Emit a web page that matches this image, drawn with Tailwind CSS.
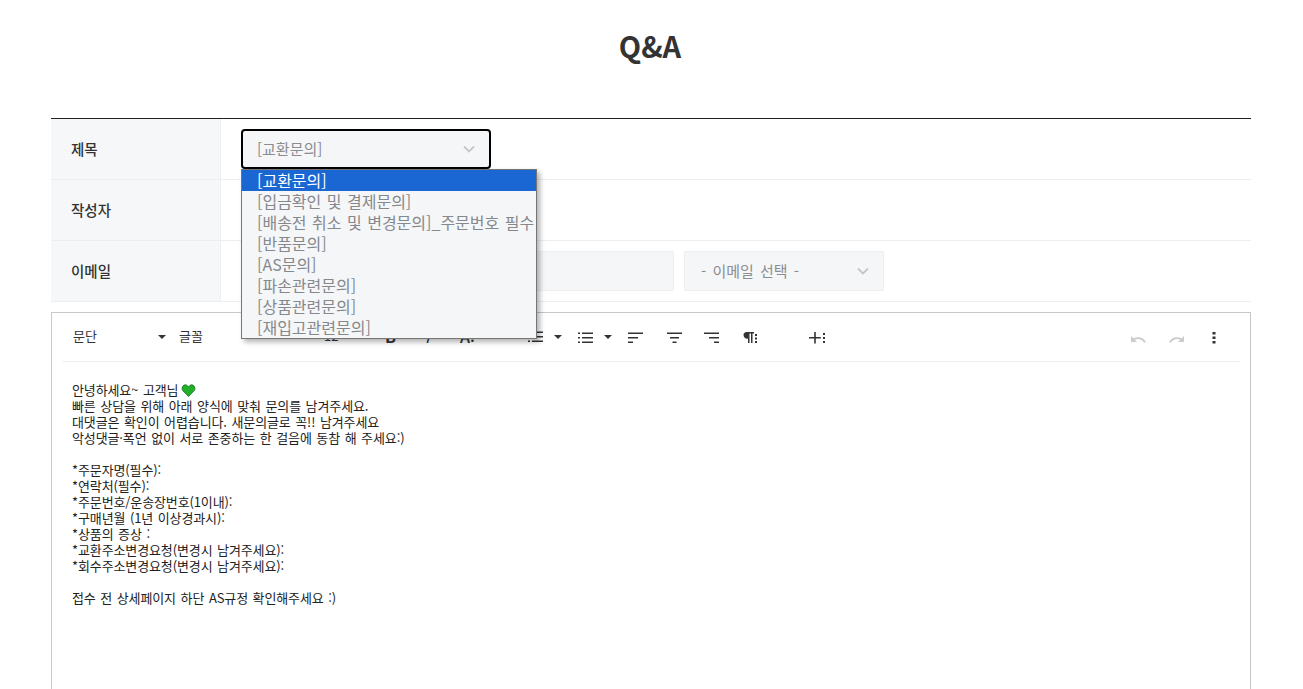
<!DOCTYPE html>
<html lang="ko">
<head>
<meta charset="utf-8">
<script src="https://cdn.jsdelivr.net/npm/@tailwindcss/browser@4"></script>
<title>Q&amp;A</title>
</head>
<body class="bg-white font-['Noto_Sans_CJK_KR','Noto_Sans',sans-serif] text-[#333]">
<div class="h-[689px] overflow-hidden">
  <div class="w-[1200px] ml-[51px]">
    <h1 class="h-[118px] pt-[24px] pr-[2px] text-center text-[29px] leading-[42px] font-bold text-[#333]">Q&amp;A</h1>

    <div class="relative border-t border-[#222]">
      <div class="flex h-[61px] border-b border-[#eceef0]">
        <div class="w-[170px] shrink-0 bg-[#f6f7f8] border-r border-[#eceef0] pl-5 flex items-center text-[14.5px] font-medium text-[#333]"><span class="-mt-px">제목</span></div>
        <div class="pl-5 flex items-center">
          <div class="w-[250px] h-[40px] bg-[#f5f6f8] border-2 border-black rounded-[4px] pl-[14px] pr-[14px] flex items-center justify-between text-[15px] text-[#8a8d91]">
            <span class="pt-px">[교환문의]</span>
            <svg class="w-3 h-2" viewBox="0 0 12 8" fill="none" stroke="#c4c7ca" stroke-width="1.8"><path d="M1 1.500l5 5 5-5"/></svg>
          </div>
        </div>
      </div>
      <div class="flex h-[61px] border-b border-[#eceef0]">
        <div class="w-[170px] shrink-0 bg-[#f6f7f8] border-r border-[#eceef0] pl-5 flex items-center text-[14.5px] font-medium text-[#333]"><span class="-mt-px">작성자</span></div>
      </div>
      <div class="flex h-[61px] border-b border-[#eceef0]">
        <div class="w-[170px] shrink-0 bg-[#f6f7f8] border-r border-[#eceef0] pl-5 flex items-center text-[14.5px] font-medium text-[#333]"><span class="-mt-px">이메일</span></div>
        <div class="pl-5 flex items-center gap-[10px]">
          <div class="w-[433px] h-[40px] bg-[#f5f6f8] border border-[#eceef0] rounded-[2px]"></div>
          <div class="w-[200px] h-[40px] bg-[#f5f6f8] border border-[#eceef0] rounded-[2px] pl-4 pr-[14px] flex items-center justify-between text-[15px] [word-spacing:2px] text-[#8a8d91]">
            <span>- 이메일 선택 -</span>
            <svg class="w-3 h-2" viewBox="0 0 12 8" fill="none" stroke="#c4c7ca" stroke-width="1.8"><path d="M1 1.500l5 5 5-5"/></svg>
          </div>
        </div>
      </div>

      <ul class="absolute left-[190px] top-[50px] w-[296px] h-[170px] z-10 bg-[#f5f6f8] border border-[#767676] shadow-[3px_3px_5px_rgba(0,0,0,0.3)] text-[16px] leading-[21px] [word-spacing:1px] text-[#85888c] overflow-hidden whitespace-nowrap">
        <li class="bg-[#1a66d2] text-white pl-[15px]">[교환문의]</li>
        <li class="pl-[15px]">[입금확인 및 결제문의]</li>
        <li class="pl-[15px]">[배송전 취소 및 변경문의]_주문번호 필수</li>
        <li class="pl-[15px]">[반품문의]</li>
        <li class="pl-[15px]">[AS문의]</li>
        <li class="pl-[15px]">[파손관련문의]</li>
        <li class="pl-[15px]">[상품관련문의]</li>
        <li class="pl-[15px]">[재입고관련문의]</li>
      </ul>
    </div>

    <div class="mt-[10px] h-[500px] border border-[#c8c8c8] px-[10px]">
      <div class="relative h-[49px] border-b border-[#f0f0f0] text-[13px] text-[#333]">
        <span class="absolute left-[11px] top-[14px] leading-[18px]">문단</span>
        <svg class="absolute left-[96px] top-[22px] w-2 h-1" viewBox="0 0 8 4" fill="#333"><path d="M0 0h8L4 4z"/></svg>
        <span class="absolute left-[117px] top-[14px] leading-[18px]">글꼴</span>
        <span class="absolute left-[262px] top-[14px] leading-[18px]">12</span>
        <span class="absolute left-[323px] top-[12px] leading-[22px] text-[16px] font-bold">B</span>
        <span class="absolute left-[363px] top-[12px] leading-[22px] text-[16px] italic">I</span>
        <span class="absolute left-[398px] top-[12px] leading-[22px] text-[16px] font-medium">A:</span>
        <svg class="absolute left-[465px] top-[16px] w-4 h-4" viewBox="0 0 16 16" fill="#333"><path d="M5 2.500h11v1.500H5zM5 7h11v1.500H5zM5 11.500h11V13H5zM1 2.500h2V4H1zM1 7h2v1.500H1zM1 11.500h2V13H1z"/></svg>
        <svg class="absolute left-[492px] top-[22px] w-2 h-1" viewBox="0 0 8 4" fill="#333"><path d="M0 0h8L4 4z"/></svg>
        <svg class="absolute left-[515px] top-[17px] w-4 h-4" viewBox="0 0 16 16" fill="#333"><path d="M5 2.500h11v1.500H5zM5 7h11v1.500H5zM5 11.500h11V13H5zM1 2.500h2V4H1zM1 7h2v1.500H1zM1 11.500h2V13H1z"/></svg>
        <svg class="absolute left-[542px] top-[22px] w-2 h-1" viewBox="0 0 8 4" fill="#333"><path d="M0 0h8L4 4z"/></svg>
        <svg class="absolute left-[566px] top-[17px] w-4 h-4" viewBox="0 0 16 16" fill="#333"><path d="M0 2.500h15V4H0zM0 7h10v1.500H0zM0 11.500h5V13H0z"/></svg>
        <svg class="absolute left-[605px] top-[17px] w-4 h-4" viewBox="0 0 16 16" fill="#333"><path d="M0 2.500h15V4H0zM3 7h9v1.500H3zM5.500 11.500h4V13h-4z"/></svg>
        <svg class="absolute left-[642px] top-[17px] w-4 h-4" viewBox="0 0 16 16" fill="#333"><path d="M0 2.500h15V4H0zM5 7h10v1.500H5zM10 11.500h5V13h-5z"/></svg>
        <svg class="absolute left-[679px] top-[17px] w-4 h-4" viewBox="0 0 16 16" fill="#333"><path d="M5 2h8v1.500h-1.500V13H10V3.500H8.500V13H7V8.500A3.200 3.200 0 0 1 5 2zM14 4h2v2h-2zM14 7.500h2v2h-2zM14 11h2v2h-2z"/></svg>
        <svg class="absolute left-[747px] top-[17px] w-4 h-4" viewBox="0 0 16 16" fill="#333"><path d="M5.200 2h1.600v5h5v1.600h-5v5H5.200v-5H0V7h5.200zM14 3h2v2h-2zM14 7h2v2h-2zM14 11h2v2h-2z"/></svg>
        <svg class="absolute left-[1068px] top-[18px] w-4 h-4" viewBox="0 0 16 16" fill="none" stroke="#ccc" stroke-width="1.800"><path d="M15 11.500C13 7 7 5.500 2.500 9"/><path d="M1 5v6h6" fill="#ccc" stroke="none"/></svg>
        <svg class="absolute left-[1107px] top-[18px] w-4 h-4" viewBox="0 0 16 16" fill="none" stroke="#ccc" stroke-width="1.800"><path d="M1 11.500C3 7 9 5.500 13.500 9"/><path d="M15 5v6H9" fill="#ccc" stroke="none"/></svg>
        <svg class="absolute left-[1150px] top-[18px] w-[4px] h-[14px]" viewBox="0 0 4 14" fill="#333"><path d="M.5 1h3v2.500h-3zM.5 5.500h3V8h-3zM.5 10h3v2.500h-3z"/></svg>
      </div>
      <div class="pl-[10px] pt-[20px] text-[13px] leading-[16px] tracking-[-0.12px] [word-spacing:1.1px] text-[#222] whitespace-pre-line">안녕하세요~ 고객님<svg class="inline-block ml-[3px] w-[15px] h-[13px] align-[-2px]" viewBox="0 0 14 13"><path d="M7 12.500 1.200 6.500C-.8 3.500 2.500-.5 5.300 1.300 6 1.800 6.600 2.400 7 3c.4-.6 1-1.200 1.700-1.700C11.500-.5 14.800 3.500 12.800 6.500z" fill="#22b02a" stroke="#0f6d17" stroke-width=".8"/></svg>
빠른 상담을 위해 아래 양식에 맞춰 문의를 남겨주세요.
대댓글은 확인이 어렵습니다. 새문의글로 꼭!! 남겨주세요
악성댓글·폭언 없이 서로 존중하는 한 걸음에 동참 해 주세요:)

*주문자명(필수):
*연락처(필수):
*주문번호/운송장번호(1이내):
*구매년월 (1년 이상경과시):
*상품의 증상 :
*교환주소변경요청(변경시 남겨주세요):
*회수주소변경요청(변경시 남겨주세요):

접수 전 상세페이지 하단 AS규정 확인해주세요 :)</div>
    </div>
  </div>
</div>
</body>
</html>
